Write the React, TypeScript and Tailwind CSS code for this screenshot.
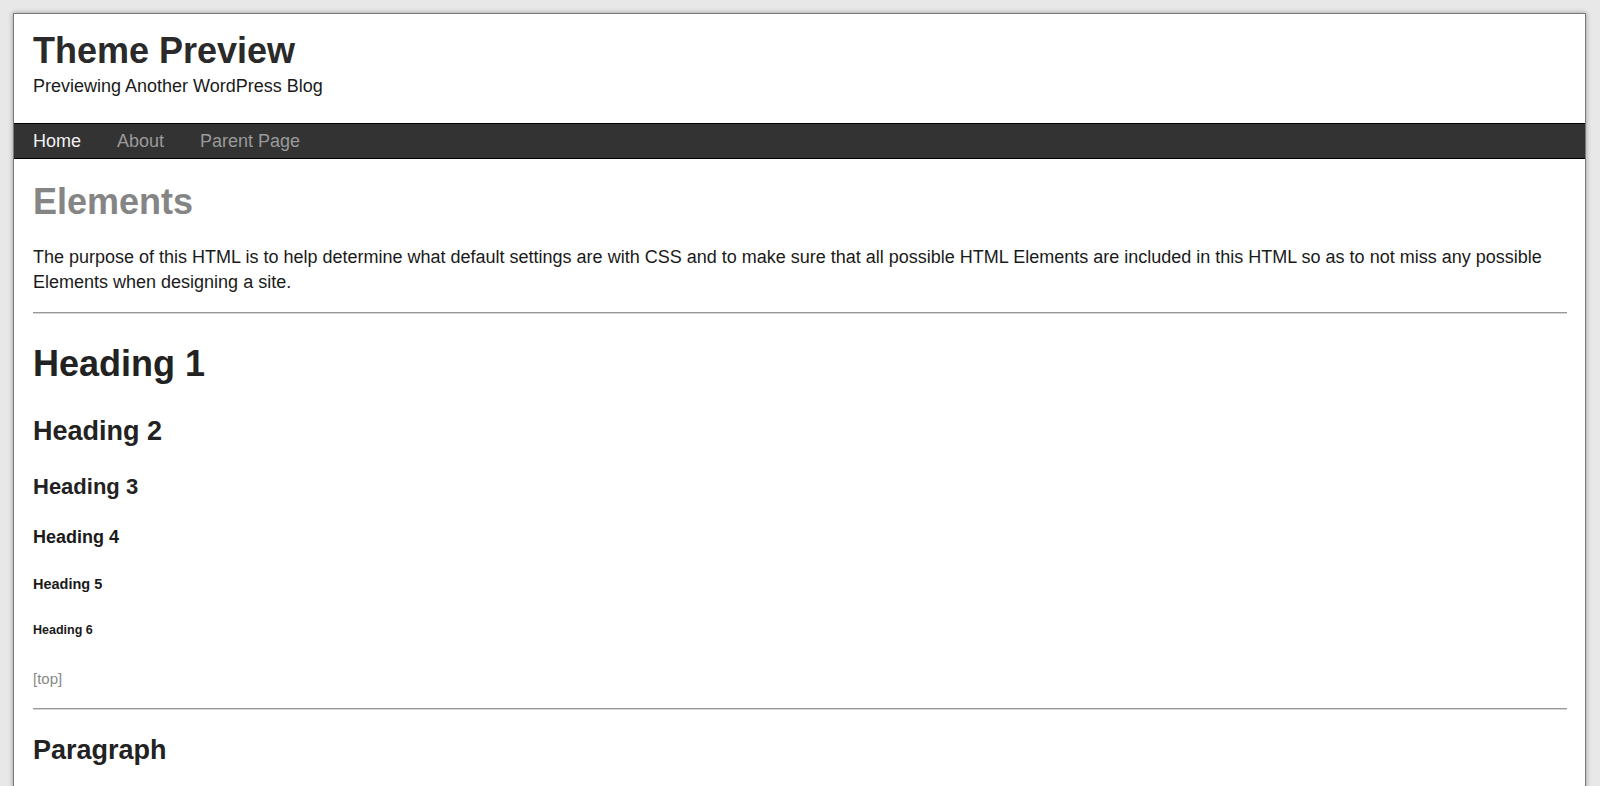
export default function App() {
  return (
    <div
      className="min-h-[786px] bg-[#e8e8e8] pt-[13px] pl-[13px] overflow-hidden"
      style={{ fontFamily: '"Liberation Sans", Arial, Helvetica, sans-serif' }}
    >
      <div className="w-[1573px] h-[790px] bg-white border border-[#7a7a7a] shadow-[0_0_5px_rgba(0,0,0,0.35)]">
        <header className="pt-[17px] pb-[24px] pl-[19px]">
          <h1 className="text-[36px] leading-[40px] font-bold text-[#2a2a2a] mb-[3px]">Theme Preview</h1>
          <p className="text-[18px] leading-[25px] text-[#1a1a1a]">Previewing Another WordPress Blog</p>
        </header>

        <nav className="h-[36px] bg-[#333] border-y border-black flex gap-[36px] pl-[19px] text-[18px] leading-[34px]">
          <a className="text-[#f2f2f2]">Home</a>
          <a className="text-[#9a9a9a]">About</a>
          <a className="text-[#9a9a9a]">Parent Page</a>
        </nav>

        <main className="px-[19px] w-[1572px]">
          <h2 className="mt-[23px] text-[36px] leading-[40px] font-bold text-[#858585]">Elements</h2>
          <p className="mt-[23px] text-[18px] leading-[25px] text-[#1a1a1a] pr-[6px]">
            The purpose of this HTML is to help determine what default settings are with CSS and to make sure that all
            possible HTML Elements are included in this HTML so as to not miss any possible Elements when designing a site.
          </p>
          <hr className="mt-[17px] border-0 border-t border-[#999] h-[2px] bg-[#d6d6d6]" />

          <h1 className="mt-[30px] text-[36px] leading-[40px] font-bold text-[#222]">Heading 1</h1>
          <h2 className="mt-[31px] text-[27px] leading-[32px] font-bold text-[#222]">Heading 2</h2>
          <h3 className="mt-[27px] text-[22px] leading-[26px] font-bold text-[#222]">Heading 3</h3>
          <h4 className="mt-[26px] text-[18px] leading-[22px] font-bold text-[#1a1a1a]">Heading 4</h4>
          <h5 className="mt-[27px] text-[14.5px] leading-[18px] font-bold text-[#1a1a1a]">Heading 5</h5>
          <h6 className="mt-[29px] text-[12.5px] leading-[16px] font-bold text-[#1a1a1a]">Heading 6</h6>
          <p className="mt-[31px] text-[15px] leading-[20px] text-[#888]">[top]</p>
          <hr className="mt-[19px] border-0 border-t border-[#999] h-[2px] bg-[#d6d6d6]" />

          <h2 className="mt-[24px] text-[27px] leading-[32px] font-bold text-[#222]">Paragraph</h2>
        </main>
      </div>
    </div>
  )
}
